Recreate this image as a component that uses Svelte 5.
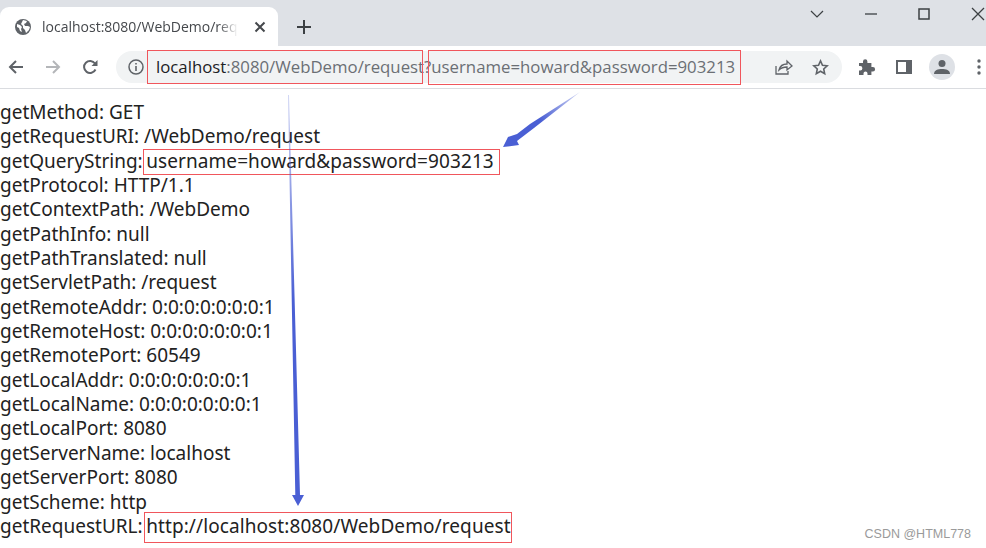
<script>
  const rows = [
    ["getMethod", "GET"],
    ["getRequestURI", "/WebDemo/request"],
    ["getQueryString", "username=howard&password=903213", "mark"],
    ["getProtocol", "HTTP/1.1"],
    ["getContextPath", "/WebDemo"],
    ["getPathInfo", "null"],
    ["getPathTranslated", "null"],
    ["getServletPath", "/request"],
    ["getRemoteAddr", "0:0:0:0:0:0:0:1"],
    ["getRemoteHost", "0:0:0:0:0:0:0:1"],
    ["getRemotePort", "60549"],
    ["getLocalAddr", "0:0:0:0:0:0:0:1"],
    ["getLocalName", "0:0:0:0:0:0:0:1"],
    ["getLocalPort", "8080"],
    ["getServerName", "localhost"],
    ["getServerPort", "8080"],
    ["getScheme", "http"],
    ["getRequestURL", "http://localhost:8080/WebDemo/request", "mark tall"],
  ];
</script>

<div class="page">
  <header class="tabstrip">
    <div class="tab">
      <svg class="globe" viewBox="0 0 16 16" width="16" height="16">
        <circle cx="8" cy="8" r="8" fill="#5f6368" />
        <path d="M2 5l3 1 2 2-1 2 1 3-2-1-1-3-2-1zM8 1l4 1-1 2-2 1 1 2 3 0 2 1-1 3-3 3-1-3-2-2 0-2-2-2 1-2z" fill="#fff" />
      </svg>
      <span class="tabtitle">localhost:8080/WebDemo/request</span>
      <svg class="tabclose" viewBox="0 0 12 12" width="12" height="12">
        <path d="M1.500 1.500l9 9M10.500 1.500l-9 9" stroke="#45484c" stroke-width="2" fill="none" />
      </svg>
    </div>
    <svg class="newtab" viewBox="0 0 14 14" width="14" height="14">
      <path d="M7 0v14M0 7h14" stroke="#3c4043" stroke-width="2" fill="none" />
    </svg>
    <div class="winctl">
      <svg viewBox="0 0 14 8" width="14" height="8"><path d="M1 1l6 6 6-6" stroke="#3c4043" stroke-width="1.200" fill="none" /></svg>
      <svg viewBox="0 0 12 2" width="12" height="2"><path d="M0 1h12" stroke="#3c4043" stroke-width="1.300" /></svg>
      <svg viewBox="0 0 12 12" width="12" height="12"><rect x="1" y="1" width="10" height="10" stroke="#3c4043" stroke-width="1.500" fill="none" /></svg>
      <svg viewBox="0 0 14 14" width="14" height="14"><path d="M1 1l12 12M13 1L1 13" stroke="#3c4043" stroke-width="1.300" fill="none" /></svg>
    </div>
  </header>

  <nav class="toolbar">
    <svg class="nav" viewBox="0 0 16 16" width="16" height="16"><path d="M15 8H2M8 2L2 8l6 6" stroke="#5f6368" stroke-width="2" fill="none" /></svg>
    <svg class="nav" viewBox="0 0 16 16" width="16" height="16"><path d="M1 8h13M8 2l6 6-6 6" stroke="#b4b6b9" stroke-width="2" fill="none" /></svg>
    <svg class="nav" viewBox="0 0 16 16" width="16" height="16"><path d="M13.500 10.500A6 6 0 1 1 13 4.500" stroke="#5f6368" stroke-width="2" fill="none" /><path d="M15.500 1v6h-6z" fill="#5f6368" /></svg>
    <div class="omnibox">
      <svg class="info" viewBox="0 0 16 16" width="16" height="16">
        <circle cx="8" cy="8" r="7" stroke="#5f6368" stroke-width="1.500" fill="none" />
        <path d="M8 7v5M8 4v1.600" stroke="#5f6368" stroke-width="1.600" />
      </svg>
      <div class="url"><span class="host">localhost</span>:8080/WebDemo/request?username=howard&amp;password=903213</div>
      <svg class="share" viewBox="0 0 18 16" width="18" height="16">
        <path d="M1 7v8h12v-3M4 11c1-4 4-6 8-6V2l5 5-5 4V8c-3 0-6 1-8 3z" stroke="#5f6368" stroke-width="1.300" fill="none" />
      </svg>
      <svg class="star" viewBox="0 0 18 18" width="17" height="17">
        <path d="M9 2l2.100 4.600 5 .6-3.700 3.400 1 4.900L9 13l-4.400 2.500 1-4.900L1.900 7.200l5-.6z" stroke="#5f6368" stroke-width="1.700" fill="none" />
      </svg>
    </div>
    <div class="actions">
      <svg viewBox="0 0 18 18" width="18" height="18">
        <path d="M1 5h4V3.500a2.200 2.200 0 0 1 4.400 0V5h4v4h1.500a2.200 2.200 0 0 1 0 4.400H13.400V17H9.500v-1.500a2 2 0 0 0-4 0V17H1v-4.500h1.200a2.200 2.200 0 0 0 0-4.400H1z" fill="#5f6368" />
      </svg>
      <svg viewBox="0 0 16 14" width="16" height="14">
        <path d="M0 0h16v14H0z" fill="#5f6368" />
        <path d="M2 2h8v10H2z" fill="#fff" />
      </svg>
      <div class="avatar">
        <svg viewBox="0 0 16 16" width="16" height="16">
          <circle cx="8" cy="4.500" r="3.500" fill="#5f6368" />
          <path d="M0 15c0-4 4-5 8-5s8 1 8 5z" fill="#5f6368" />
        </svg>
      </div>
      <svg class="menu" viewBox="0 0 4 16" width="4" height="16">
        <circle cx="2" cy="2" r="1.700" fill="#5f6368" />
        <circle cx="2" cy="8" r="1.700" fill="#5f6368" />
        <circle cx="2" cy="14" r="1.700" fill="#5f6368" />
      </svg>
    </div>
  </nav>

  <main class="content">
    {#each rows as [name, value, mark]}
      <div class="row">{name}:{#if mark}<span class={mark}>{value}</span>{:else}{" " + value}{/if}</div>
    {/each}
  </main>

  <!-- annotations drawn over the screenshot -->
  <div class="box" style="left:147px;top:50px;width:276px;height:34px"></div>
  <div class="box" style="left:428px;top:50px;width:313px;height:35px"></div>
  <svg class="arrows" viewBox="0 0 986 548" width="986" height="548">
    <defs>
      <linearGradient id="fade-down" gradientUnits="userSpaceOnUse" x1="0" y1="95" x2="0" y2="300">
        <stop offset="0" stop-color="#4a5fd4" stop-opacity="0.25" />
        <stop offset="1" stop-color="#4a5fd4" />
      </linearGradient>
      <linearGradient id="fade-diag" gradientUnits="userSpaceOnUse" x1="580" y1="92" x2="540" y2="120">
        <stop offset="0" stop-color="#4a5fd4" stop-opacity="0.25" />
        <stop offset="1" stop-color="#4a5fd4" />
      </linearGradient>
    </defs>
    <path d="M580 92L530 124 517 134 508 137 503 147 519 145 517 141 534 128z" fill="url(#fade-diag)" />
    <path d="M288 95L295.300 495 292 495 298 506 304 495 300 495 289 95z" fill="url(#fade-down)" />
  </svg>
  <span class="watermark">CSDN @HTML778</span>
</div>

<style>
  :global(body) {
    margin: 0;
    background: #fff;
  }

  .page {
    position: relative;
    width: 986px;
    height: 548px;
    overflow: hidden;
    font-family: "Noto Sans", sans-serif;
  }

  .tabstrip {
    display: flex;
    align-items: flex-end;
    height: 46px;
    background: #dee1e6;
  }

  .tab {
    display: flex;
    align-items: center;
    width: 278px;
    height: 39px;
    box-sizing: border-box;
    padding: 0 16px 0 15px;
    background: #fff;
    border-radius: 9px 9px 0 0;
  }

  .tabtitle {
    flex: 1;
    margin-left: 11px;
    overflow: hidden;
    white-space: nowrap;
    font-family: "Open Sans", sans-serif;
    font-size: 14px;
    color: #45484c;
    -webkit-mask-image: linear-gradient(to right, #000 90%, transparent);
    mask-image: linear-gradient(to right, #000 90%, transparent);
  }

  .tabclose {
    margin-left: 16px;
    margin-right: -4px;
  }

  .newtab {
    margin: 0 0 12px 19px;
  }

  .winctl {
    display: flex;
    align-items: center;
    margin-left: auto;
    align-self: flex-start;
    height: 28px;
    gap: 41px;
    padding-right: 1px;
  }

  .toolbar {
    display: flex;
    align-items: center;
    height: 42px;
    box-sizing: border-box;
    padding-left: 8px;
    background: #fff;
  }

  .nav {
    margin-right: 21px;
  }

  .omnibox {
    display: flex;
    align-items: center;
    flex: none;
    width: 726px;
    height: 32px;
    margin-left: -3px;
    box-sizing: border-box;
    padding: 0 13px 0 12px;
    background: #f1f3f4;
    border-radius: 16px;
  }

  .info {
    flex: none;
  }

  .url {
    flex: none;
    width: 610px;
    margin-left: 12px;
    white-space: nowrap;
    font-family: "Open Sans", sans-serif;
    font-size: 16.800px;
    line-height: 30px;
    color: #6b6f74;
  }

  .host {
    color: #202124;
  }

  .share {
    flex: none;
    margin-left: 9px;
  }

  .star {
    flex: none;
    margin-left: 19px;
  }

  .actions {
    display: flex;
    align-items: center;
    margin-left: 16px;
    gap: 20px;
  }

  .avatar {
    display: flex;
    align-items: center;
    justify-content: center;
    width: 26px;
    height: 26px;
    margin-left: -3px;
    border-radius: 50%;
    background: #dee1e6;
  }

  .menu {
    margin-left: 2px;
  }

  .content {
    border-top: 1px solid #dadce0;
    padding-top: 11px;
  }

  .row {
    height: 24.350px;
    line-height: 24.350px;
    white-space: nowrap;
    font-size: 19px;
    color: #222;
  }

  .mark {
    display: inline-block;
    height: 26px;
    line-height: 22px;
    box-sizing: border-box;
    padding: 0 5px 0 2.500px;
    border: 1.500px solid #f0565c;
    vertical-align: top;
    letter-spacing: 0.090px;
  }

  .tall {
    height: 31px;
    line-height: 26px;
    margin-top: -2px;
    margin-left: 1px;
    padding: 0 0 0 1.500px;
  }

  .box {
    position: absolute;
    box-sizing: border-box;
    border: 1.500px solid #f0565c;
  }

  .arrows {
    position: absolute;
    left: 0;
    top: 0;
    pointer-events: none;
  }

  .watermark {
    position: absolute;
    right: 15px;
    top: 527px;
    font-family: "Liberation Sans", sans-serif;
    font-size: 12.500px;
    color: #9a9a9a;
  }
</style>
